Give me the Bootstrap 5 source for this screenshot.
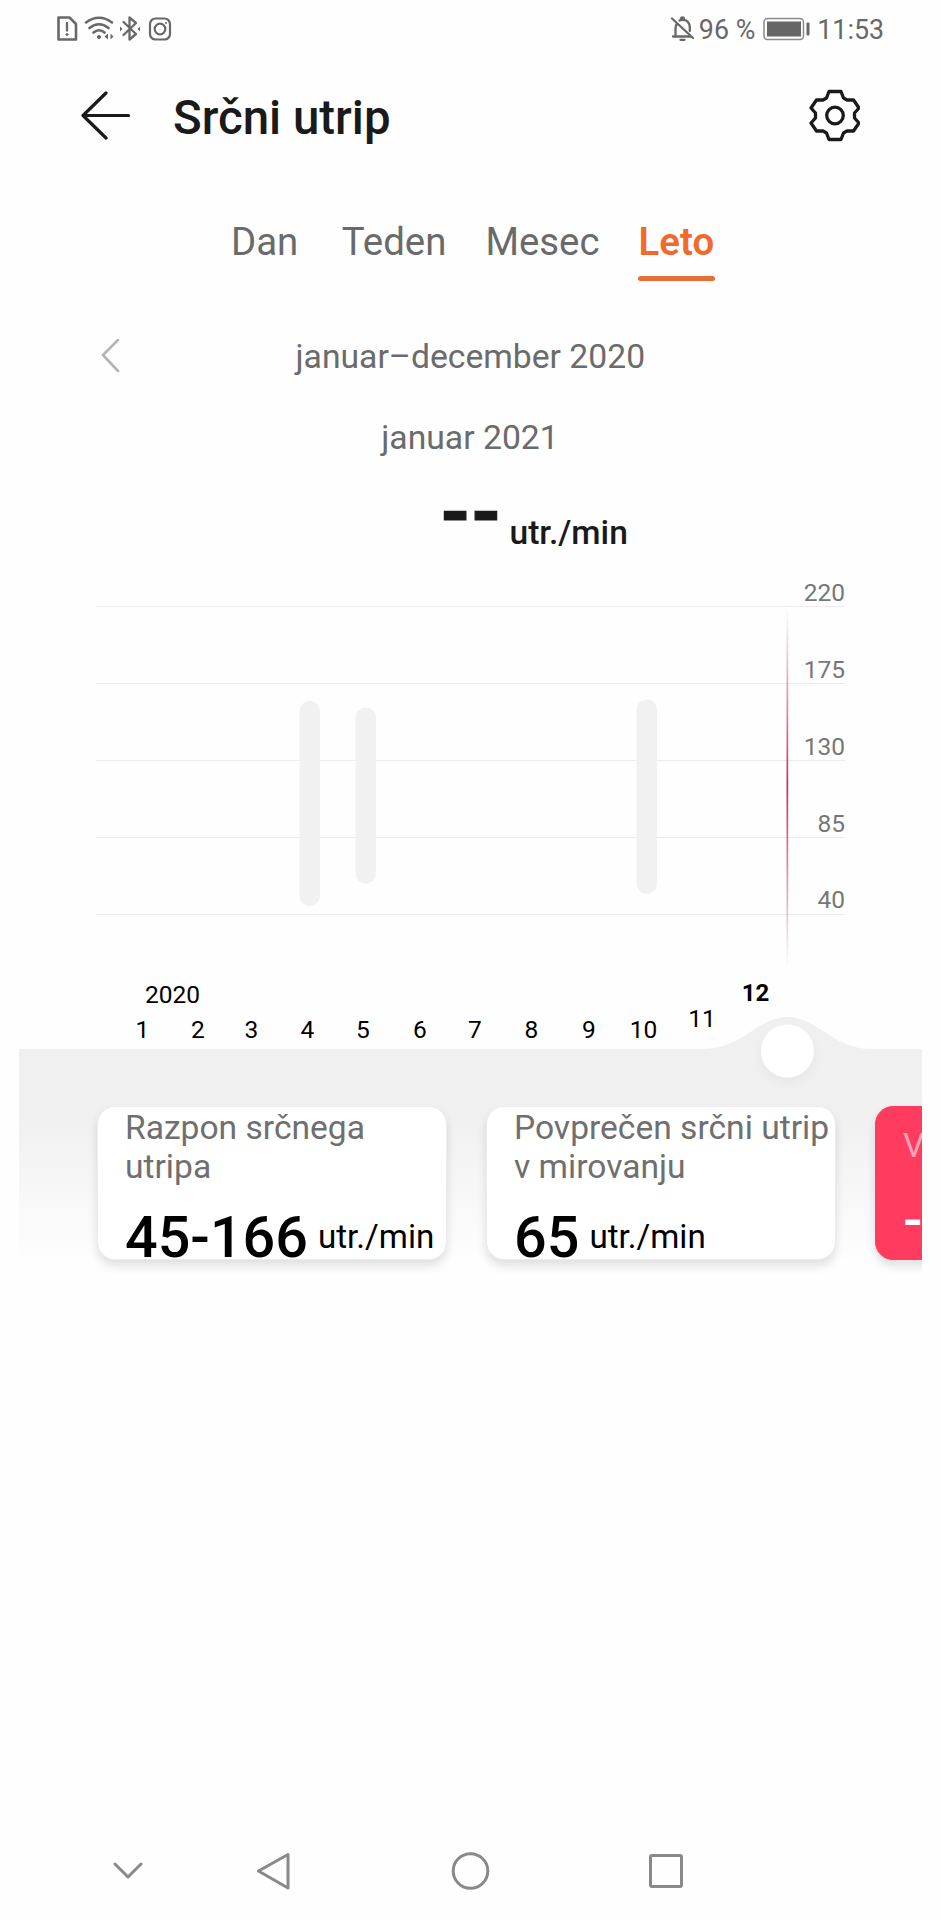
<!DOCTYPE html>
<html lang="sl">
<head>
<meta charset="utf-8">
<meta name="viewport" content="width=device-width, initial-scale=1">
<title>Srčni utrip</title>
<link href="https://cdn.jsdelivr.net/npm/bootstrap@5.3.0/dist/css/bootstrap.min.css" rel="stylesheet">
<style>
body{font-family:Roboto,"Noto Sans",sans-serif;background:#fefefe;color:#1a1a1a;overflow:hidden}
svg{display:block;flex:none}
.screen{width:941px;height:1920px}
.statusbar{height:58px;padding:0 57px 0 56px;color:#686868;font-size:26.8px;line-height:60px}
.statusbar span{padding-top:1px}
.topbar{height:115px;padding:0 81px}
.topbar h1{font-size:47.4px;line-height:117px;margin:5px 0 0 42px;font-weight:500}
.tabs{height:119px;padding:42px 0 0 231px;font-size:38.4px;line-height:53px;color:#6a6a6a;gap:43.500px}
.tabs span:nth-child(3){margin-left:-4.500px}
.tabs .current{color:#f16a2d;font-weight:600;margin-left:-4.500px}
.tabs .current::after{content:"";display:block;height:5px;margin:8px 0 0 -1px;border-radius:3px;background:#e86f34;width:77px}
.period{height:81px;padding-left:101px;color:#6b6b6b;font-size:33.7px;line-height:81px}
.reading{height:88px;padding-left:440px;color:#1a1a1a}
.dashes{font-size:78px;font-weight:700;line-height:88px;margin-top:-34px;-webkit-text-stroke:1.200px #1a1a1a}
.reading .unit{font-size:33.6px;font-weight:500;margin-left:8px;line-height:88px;margin-top:4px}
.cards{height:234px;margin:0 19px 0 19px;padding:0 0 0 78px;gap:39px;background:linear-gradient(#f0f0f0,#f0f0f0 10px,#fefefe 155px)}
.tile{width:350px;height:154px;flex:none;border:1px solid #ececec;border-radius:18px;background:#fff;box-shadow:0 6px 10px rgba(0,0,0,.12);padding:1px 0 0 27px}
.tile p{font-size:33.6px;line-height:39px;height:78px;color:#6f6f6f}
.tile .num{font-size:57.5px;font-weight:500;color:#000;line-height:60px}
.tile .unit{font-size:33.2px;color:#000;margin-left:10px;line-height:60px;margin-top:-1px}
.tile .valueline{margin-top:22px;height:60px}
.tile.hot{background:#ff3b60;border-color:#ff3b60}
.tile.hot p{color:#ffa4b5;margin-top:18px!important}
.tile.hot .valueline{margin-top:-13px}
.tile.hot .num{color:#fff;font-size:57.5px}
.navkeys{height:98px;padding-left:112px}
</style>
</head>
<body>
<div class="screen d-flex flex-column">
  <header class="statusbar d-flex align-items-center">
    <svg width="118" height="30" viewBox="56 14 118 30" fill="none" stroke="#686868" stroke-width="2.6" stroke-linejoin="round" stroke-linecap="round">
      <path d="M58.5 17.500h11l6.500 6.500v15.500h-17.500z"/><path d="M67 23v7.500" stroke-width="2.300"/><circle cx="67" cy="34.500" r="1" fill="#686868" stroke-width="1"/>
      <path d="M86 22.500q13-9.500 26 0M89.500 28q9.500-7.500 19 0M93.500 32.500q5.500-4.500 11 0"/><circle cx="99" cy="37" r="1.600" fill="#686868" stroke-width="1"/><path d="M108 33.500v6l-3.500-3zM110.500 33.500v6l3-3z" fill="#686868" stroke="none"/>
      <path d="M123.500 22l12.500 12-6.500 5.500v-22l6.500 5.500-12.500 12" stroke-width="2.300"/><path d="M120 26.500v5l2.500-2.500zM140 26.500v5l-2.500-2.500z" fill="#686868" stroke="none"/>
      <rect x="150" y="18.500" width="20" height="21" rx="5.500" stroke-width="2.200"/><circle cx="160" cy="29" r="5.300" stroke-width="2.200"/><circle cx="166" cy="23" r="1" fill="#686868" stroke="none"/>
    </svg>
    <div class="d-flex align-items-center ms-auto">
      <svg width="24" height="28" viewBox="670 15 24 28" fill="none" stroke="#686868" stroke-width="2.300" stroke-linecap="round" stroke-linejoin="round"><path d="M672 18.500l21 19.500M673 36.500h17.500M675.500 36v-7.500q0-3 1.500-5M679.500 20.500q3-1.500 6.500 0 3.800 2.200 3.800 7v3.500M681 19q0-1.500 1.500-1.500t1.500 1.500M680.500 39.800h4"/></svg>
      <span style="margin-left:5px">96 %</span>
      <svg class="ms-2" width="48" height="24" viewBox="763 17 48 24"><rect x="764" y="18.500" width="39.500" height="21" rx="3.500" fill="none" stroke="#8a8a8a" stroke-width="1.500"/><rect x="767" y="21.500" width="34" height="15" fill="#666"/><rect x="806.500" y="22.500" width="3" height="13" rx="1" fill="#686868"/></svg>
      <span style="margin-left:6px">11:53</span>
    </div>
  </header>

  <div class="topbar d-flex align-items-center">
    <svg width="50" height="54" viewBox="81 89 50 54" fill="none" stroke="#1a1a1a" stroke-width="3.200" stroke-linecap="round" stroke-linejoin="round"><path d="M106 93l-23 22.500 23 22.500M83.500 115.500H128.500"/></svg>
    <h1>Srčni utrip</h1>
    <svg class="ms-auto" width="52" height="54" viewBox="-27 -27 52 54" fill="none" stroke="#1a1a1a" stroke-width="3.300" stroke-linejoin="round"><g transform="translate(0 -.5)"><path d="M-6-24H6L8.500-17.500 12-15.500 18.500-15.500 24-7.500 19.500-2.500V2.500L24 7.500 18.500 15.500 12 15.500 8.500 17.500 6 24H-6L-8.500 17.500-12 15.500-18.500 15.500-24 7.500-19.500 2.500V-2.500L-24-7.500-18.500-15.500-12-15.500-8.500-17.500Z"/><circle r="8.300"/></g></svg>
  </div>

  <nav class="tabs d-flex">
    <span>Dan</span><span>Teden</span><span>Mesec</span><span class="current">Leto</span>
  </nav>

  <div class="period d-flex align-items-center" style="margin-top:24px">
    <svg width="20" height="36" viewBox="101 339 20 36" fill="none" stroke="#b4b4b4" stroke-width="2.600" stroke-linecap="round" stroke-linejoin="round"><path d="M118 340l-15 15 15 16"/></svg>
    <span style="margin-left:174.500px">januar–december 2020</span>
  </div>
  <div class="period ps-0 text-center" style="padding-right:1px">januar 2021</div>
  <div class="reading d-flex align-items-center" style="margin-top:9px">
    <span class="dashes">--</span><span class="unit">utr./min</span>
  </div>

  <svg width="941" height="531" viewBox="0 575 941 531" font-size="24.500" fill="#000">
    <defs>
      <linearGradient id="marker" x1="0" y1="0" x2="0" y2="1"><stop offset="0" stop-color="#c42f5b" stop-opacity="0"/><stop offset=".5" stop-color="#c42f5b"/><stop offset="1" stop-color="#c42f5b" stop-opacity="0"/></linearGradient>
      <filter id="soft" x="-50%" y="-50%" width="200%" height="200%"><feDropShadow dx="0" dy="5" stdDeviation="5" flood-opacity=".04"/></filter>
    </defs>
    <path d="M96 606.500H845M96 683.500H845M96 760.500H845M96 837.500H845M96 914.500H845" stroke="#ebebeb" stroke-width="1.200"/>
    <g fill="#f1f1f1"><rect x="299.500" y="701" width="20.500" height="205" rx="10.200"/><rect x="355.500" y="707.500" width="20.500" height="176" rx="10.200"/><rect x="636.500" y="699.500" width="20.500" height="194.500" rx="10.200"/></g>
    <rect x="786.500" y="607" width="1.700" height="360" fill="url(#marker)"/>
    <g text-anchor="end" fill="#777"><text x="845" y="601">220</text><text x="845" y="678">175</text><text x="845" y="755">130</text><text x="845" y="831.500">85</text><text x="845" y="908">40</text></g>
    <g text-anchor="middle">
      <text x="172.500" y="1003">2020</text>
      <text x="142.500" y="1038">1</text><text x="198" y="1038">2</text><text x="251.500" y="1038">3</text><text x="307.500" y="1038">4</text><text x="363" y="1038">5</text><text x="420" y="1038">6</text><text x="475" y="1038">7</text><text x="531.500" y="1038">8</text><text x="589" y="1038">9</text><text x="643.500" y="1038">10</text><text x="702" y="1027">11</text><text x="755.500" y="1001" font-weight="700" font-size="24">12</text>
    </g>
    <path d="M19 1049H703C743 1049 757 1017 787.500 1017S832 1049 872 1049H922V1106H19Z" fill="#f0f0f0"/>
    <circle cx="787.500" cy="1051" r="26.500" fill="#fff" filter="url(#soft)"/>
  </svg>

  <section class="cards d-flex overflow-hidden">
    <div class="tile"><p class="m-0">Razpon srčnega<br>utripa</p><div class="valueline d-flex"><span class="num">45-166</span><span class="unit">utr./min</span></div></div>
    <div class="tile"><p class="m-0 text-nowrap">Povprečen srčni utrip<br>v mirovanju</p><div class="valueline d-flex"><span class="num">65</span><span class="unit">utr./min</span></div></div>
    <div class="tile hot"><p class="m-0">V</p><div class="valueline"><span class="num">-</span></div></div>
  </section>

  <footer class="navkeys mt-auto">
    <svg width="580" height="98" viewBox="112 1822 580 98" fill="none" stroke="#898989" stroke-width="3" stroke-linecap="round" stroke-linejoin="round"><path d="M115 1864l13 13 13-13M288 1854.500v33.500l-29.500-17z"/><circle cx="470.500" cy="1871" r="17.300"/><rect x="650.500" y="1855.500" width="31" height="31" rx="1.500"/></svg>
  </footer>
</div>
<script src="https://cdn.jsdelivr.net/npm/bootstrap@5.3.0/dist/js/bootstrap.bundle.min.js"></script>
</body>
</html>
